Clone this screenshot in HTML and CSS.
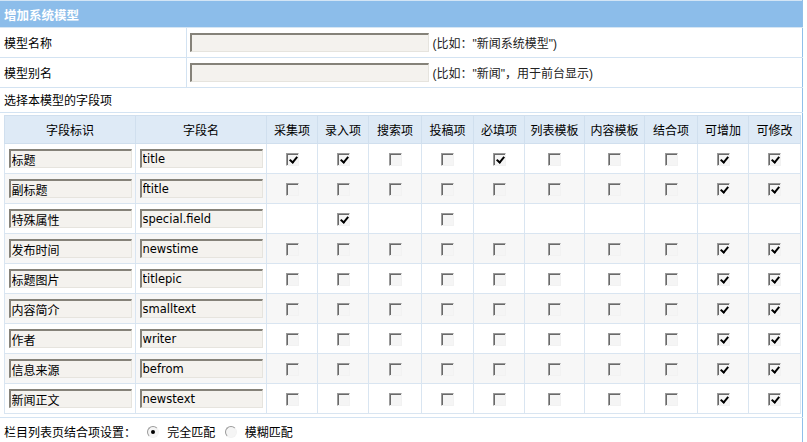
FILE: index.html
```html
<!DOCTYPE html>
<html lang="zh-CN">
<head>
    <meta charset="UTF-8">
    <title>增加系统模型</title>
    <link rel="stylesheet" href="styles.css">
</head>
<body>
    <table class="frame">
        <colgroup>
            <col class="col-label">
            <col>
        </colgroup>
        <tr>
            <td class="frame-title" colspan="2">增加系统模型</td>
        </tr>
        <tr class="form-row">
            <td class="label">模型名称</td>
            <td class="field"><input class="text-wide" type="text"><span class="hint">(比如："新闻系统模型")</span></td>
        </tr>
        <tr class="form-row">
            <td class="label">模型别名</td>
            <td class="field"><input class="text-wide" type="text"><span class="hint">(比如："新闻"，用于前台显示)</span></td>
        </tr>
        <tr class="section-row">
            <td colspan="2">选择本模型的字段项</td>
        </tr>
        <tr>
            <td class="grid-wrap" colspan="2">
                <table class="grid">
                    <colgroup>
                        <col style="width:131px">
                        <col style="width:131px">
                        <col style="width:51px">
                        <col style="width:51px">
                        <col style="width:53px">
                        <col style="width:52px">
                        <col style="width:51px">
                        <col style="width:60px">
                        <col style="width:60px">
                        <col style="width:53px">
                        <col style="width:51px">
                        <col style="width:52px">
                    </colgroup>
                    <thead>
                        <tr>
                            <th>字段标识</th>
                            <th>字段名</th>
                            <th>采集项</th>
                            <th>录入项</th>
                            <th>搜索项</th>
                            <th>投稿项</th>
                            <th>必填项</th>
                            <th>列表模板</th>
                            <th>内容模板</th>
                            <th>结合项</th>
                            <th>可增加</th>
                            <th>可修改</th>
                        </tr>
                    </thead>
                    <tbody id="fieldRows"></tbody>
                </table>
            </td>
        </tr>
        <tr class="match-row">
            <td colspan="2">
                栏目列表页结合项设置：
                <label class="opt"><input type="radio" name="match" checked>完全匹配</label>
                <label class="opt"><input type="radio" name="match">模糊匹配</label>
            </td>
        </tr>
    </table>

    <script>
        // 1 = checked, 0 = unchecked, null = no box
        const fields = [
            { title: '标题', name: 'title', flags: [1, 1, 0, 0, 1, 0, 0, 0, 1, 1] },
            { title: '副标题', name: 'ftitle', flags: [0, 0, 0, 0, 0, 0, 0, 0, 1, 1] },
            { title: '特殊属性', name: 'special.field', flags: [null, 1, null, 0, null, null, null, null, null, null] },
            { title: '发布时间', name: 'newstime', flags: [0, 0, 0, 0, 0, 0, 0, 0, 1, 1] },
            { title: '标题图片', name: 'titlepic', flags: [0, 0, 0, 0, 0, 0, 0, 0, 1, 1] },
            { title: '内容简介', name: 'smalltext', flags: [0, 0, 0, 0, 0, 0, 0, 0, 1, 1] },
            { title: '作者', name: 'writer', flags: [0, 0, 0, 0, 0, 0, 0, 0, 1, 1] },
            { title: '信息来源', name: 'befrom', flags: [0, 0, 0, 0, 0, 0, 0, 0, 1, 1] },
            { title: '新闻正文', name: 'newstext', flags: [0, 0, 0, 0, 0, 0, 0, 0, 1, 1] }
        ];

        const body = document.getElementById('fieldRows');
        fields.forEach(field => {
            let html = `<tr>
                <td><input class="text-title" type="text" value="${field.title}"></td>
                <td><input class="text-name" type="text" value="${field.name}"></td>`;
            field.flags.forEach(flag => {
                if (flag === null) {
                    html += '<td></td>';
                } else {
                    html += `<td class="box"><input type="checkbox"${flag ? ' checked' : ''}></td>`;
                }
            });
            html += '</tr>';
            body.innerHTML += html;
        });
    </script>
</body>
</html>
```

FILE: styles.css
```css
body {
    margin: 0;
    background-color: #fff;
    color: #000;
    font-family: "Liberation Sans", "Noto Sans CJK SC", sans-serif;
    font-size: 12px;
}
table {
    border-collapse: collapse;
}
td, th {
    padding: 0;
}
.frame {
    width: 803px;
    table-layout: fixed;
    border-top: 1px solid #d3e5f5;
    border-right: 1px solid #8fbfea;
}
.col-label {
    width: 186px;
}
.frame-title {
    height: 26px;
    padding-left: 4px;
    background-color: #8cbdea;
    color: #fff;
    font-weight: bold;
    font-size: 12.5px;
    border-bottom: 1px solid #d6e6f4;
}
.form-row td {
    height: 29px;
    border-bottom: 1px solid #d3e3f2;
}
.form-row .label {
    padding-left: 4px;
    border-right: 1px solid #d3e3f2;
}
.form-row .field {
    padding-left: 3px;
}
input[type="text"] {
    box-sizing: border-box;
    margin: 0;
    padding: 0 1px;
    border-style: solid;
    border-width: 2px 1px 1px 2px;
    border-color: #858279 #e6e4de #e6e4de #858279;
    background-color: #f4f2ee;
    color: #000;
    font-family: "Liberation Sans", "Noto Sans CJK SC", sans-serif;
    font-size: 12px;
    vertical-align: middle;
}
.text-wide {
    width: 239px;
    height: 19px;
}
.hint {
    margin-left: 4px;
    color: #222;
    vertical-align: middle;
}
.section-row td {
    height: 25px;
    padding-left: 4px;
    vertical-align: top;
    padding-top: 3px;
    box-sizing: border-box;
    border-bottom: 1px solid #d3e3f2;
}
.grid-wrap {
    padding: 2px 2px 3px 4px;
    border-bottom: 1px solid #d3e3f2;
}
.grid {
    width: 100%;
    table-layout: fixed;
    border: 1px solid #d0dfee;
}
.grid th {
    height: 27px;
    background-color: #deeaf6;
    font-weight: normal;
    text-align: center;
    border: 1px solid #d0dfee;
}
.grid td {
    height: 29px;
    text-align: center;
    border: 1px solid #d9e5f1;
}
.grid tbody tr:nth-child(even) td {
    background-color: #f7f7f7;
}
.text-title,
.text-name {
    width: 123px;
    height: 19px;
    text-align: left;
}
.text-title {
    padding-left: 0;
}
.text-name {
    font-family: "DejaVu Sans", sans-serif !important;
    font-size: 11.5px !important;
}
input[type="checkbox"] {
    appearance: none;
    -webkit-appearance: none;
    position: relative;
    box-sizing: border-box;
    width: 13px;
    height: 13px;
    margin: 0;
    border: 1px solid;
    border-color: #9a9a9a #f2f2f2 #f2f2f2 #9a9a9a;
    box-shadow: inset 1px 1px 0 #6a6a6a;
    background-color: #f5f5f5;
    vertical-align: middle;
}
input[type="checkbox"]:checked::after {
    content: "";
    position: absolute;
    left: 4px;
    top: 1px;
    width: 3px;
    height: 6px;
    border-right: 2px solid #000;
    border-bottom: 2px solid #000;
    transform: rotate(40deg);
}
.match-row td {
    height: 26px;
    padding-left: 4px;
    padding-bottom: 2px;
}
.opt {
    margin-left: 8px;
}
.opt + .opt {
    margin-left: 6px;
}
input[type="radio"] {
    appearance: none;
    -webkit-appearance: none;
    position: relative;
    box-sizing: border-box;
    width: 12px;
    height: 12px;
    margin: 0 8px 0 0;
    border: 1px solid;
    border-color: #9a9a9a #f2f2f2 #f2f2f2 #9a9a9a;
    border-radius: 50%;
    background-color: #f5f5f5;
    vertical-align: -1px;
}
input[type="radio"]:checked::after {
    content: "";
    position: absolute;
    left: 3px;
    top: 3px;
    width: 4px;
    height: 4px;
    border-radius: 50%;
    background-color: #000;
}
```
